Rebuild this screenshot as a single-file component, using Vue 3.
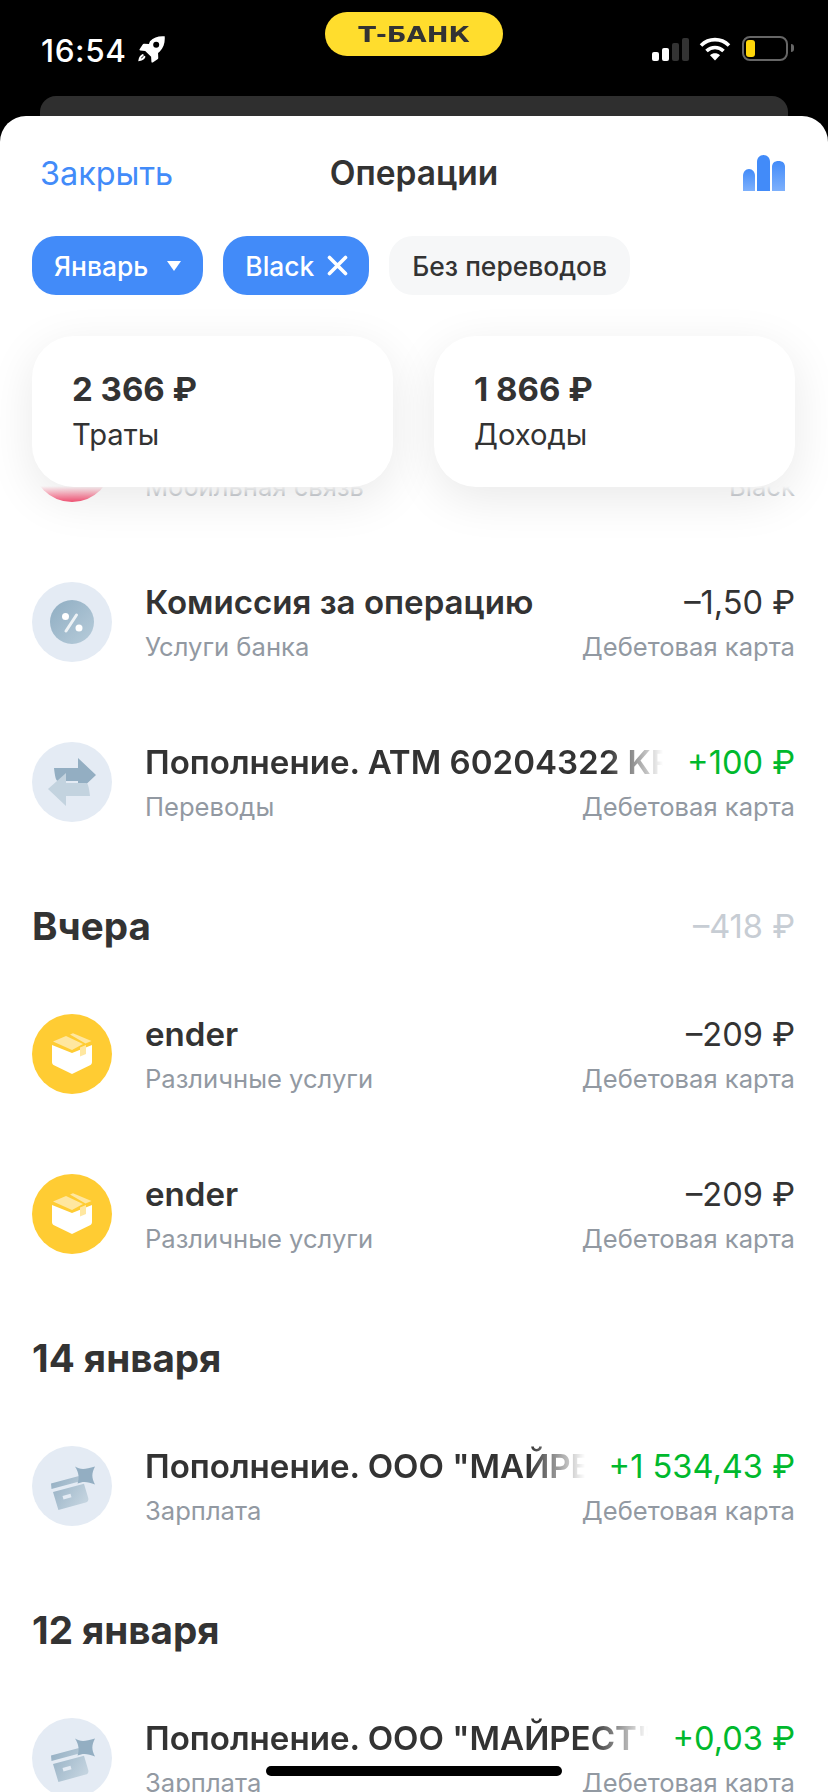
<template>
  <div class="screen">
    <div class="status">
      <div class="status-left">
        <span class="time">16:54</span>
        <svg class="rocket" width="28" height="28" viewBox="0 0 27 27">
          <path fill="#fff" d="M26.700.3c.5 6-1 11-4.700 14.700l-1.700 1.500.2 4.600c0 .6-.2 1.100-.7 1.400l-4.600 3c-.6.4-1.300 0-1.300-.7l-.3-4.700-5.700-5.700-4.700-.3c-.7-.1-1-.8-.7-1.300l3-4.600c.3-.5.800-.8 1.400-.7l4.600.2L12.500 5C16.200 1.300 20.700-.2 26.700.3z"/>
          <circle cx="18.500" cy="8.500" r="2.900" fill="#000"/>
          <path fill="none" stroke="#fff" stroke-width="2" stroke-linecap="round" d="M5.500 18.500c-1.700.8-2.700 2.200-3.100 4.700 2.500-.4 3.900-1.400 4.700-3.100"/>
        </svg>
      </div>
      <div class="brand"><span>Т-БАНК</span></div>
      <div class="status-right">
        <div class="signal">
          <i class="on b1"></i><i class="on b2"></i><i class="b3"></i><i class="b4"></i>
        </div>
        <svg class="wifi" width="32" height="25" viewBox="0 0 32 25">
          <g fill="none" stroke="#fff" stroke-width="3.600">
            <path d="M2 9.500c8-7.800 20-7.800 28 0"/>
            <path d="M7.500 15c4.900-4.700 12.100-4.700 17 0"/>
          </g>
          <path fill="#fff" d="M11 19.200c3-2.600 7-2.600 10 0L16 24.500z"/>
        </svg>
        <div class="battery"><span></span></div>
        <div class="nub"></div>
      </div>
    </div>
    <div class="back-sheet"></div>

    <div class="sheet">
      <header class="head">
        <span class="close">Закрыть</span>
        <span class="title">Операции</span>
        <svg class="stats" width="42" height="36" viewBox="0 0 42 36">
          <defs>
            <linearGradient id="bar" x1="0" y1="0" x2="0" y2="1">
              <stop offset="0" stop-color="#428bf9"/>
              <stop offset="1" stop-color="#7db0fc"/>
            </linearGradient>
          </defs>
          <path fill="url(#bar)" d="M0 36V21c0-4 2.500-7 6-7s6 3 6 7v15z"/>
          <path fill="#428bf9" d="M14 36V7c0-4 2.500-7 6.500-7S27 3 27 7v29z"/>
          <path fill="url(#bar)" d="M29 36V12c0-4 2.500-6 6.500-6S42 8 42 12v24z"/>
        </svg>
      </header>

      <div class="chips">
        <div class="chip active month">
          Январь
          <svg width="14" height="10" viewBox="0 0 14 10"><path fill="#fff" d="M0 0h14L7 10z"/></svg>
        </div>
        <div class="chip active product">
          Black
          <svg width="21" height="21" viewBox="0 0 21 21"><path stroke="#fff" stroke-width="3.600" stroke-linecap="round" d="M2.500 2.500l16 16M18.500 2.500l-16 16"/></svg>
        </div>
        <div class="chip plain">Без переводов</div>
      </div>

      <div class="list">
        <template v-for="(item, i) in items" :key="i">
          <div v-if="item.heading" class="section">
            <span>{{ item.heading }}</span>
            <span v-if="item.total" class="section-total">{{ item.total }}</span>
          </div>
          <div v-else class="row">
            <div class="avatar" :class="'is-' + item.icon">
              <svg v-if="item.icon === 'percent'" width="80" height="80" viewBox="0 0 80 80">
                <circle cx="40" cy="40" r="22" fill="url(#pct)"/>
                <circle cx="33.500" cy="34.500" r="3.500" fill="#fff"/>
                <circle cx="47" cy="46" r="3.500" fill="#fff"/>
                <path stroke="#fff" stroke-opacity=".8" stroke-width="3" stroke-linecap="round" d="M44.500 33L34 49"/>
                <defs>
                  <linearGradient id="pct" x1="0" y1="0" x2="1" y2="1">
                    <stop offset="0" stop-color="#8fadc2"/>
                    <stop offset="1" stop-color="#b7ccda"/>
                  </linearGradient>
                </defs>
              </svg>
              <svg v-else-if="item.icon === 'swap'" width="80" height="80" viewBox="0 0 80 80">
                <path fill="#93aec2" d="M22 26h24V16l18 17-18 17V39H26c-2 0-3-4-4-13z"/>
                <path fill="#c3d3df" d="M58 54H34v10L16 47l18-16v10h20c2 0 3 4 4 13z"/>
              </svg>
              <svg v-else-if="item.icon === 'box'" width="80" height="80" viewBox="0 0 80 80">
                <path fill="#fff" d="M20 31l20 8 20-8v17c0 1.500-.7 2.600-2 3.200L40 60l-18-8.800c-1.300-.6-2-1.700-2-3.200z"/>
                <path fill="#ffe7a0" d="M21 27.500l13-5.500 17 8-11 6zM38 20.500l3-1.300L59.500 27l-6 2.500z"/>
                <path fill="#ffe7a0" d="M48 33.500l6-2.500v9l-6 2.500z"/>
              </svg>
              <svg v-else-if="item.icon === 'salary'" width="80" height="80" viewBox="0 0 80 80">
                <path fill="url(#crd)" d="M19 37.500l27-7.200c2-.5 4 .6 4.500 2.500l.5 1.700-31.500 8.500zM21 46l31-8.300 4.300 14.500c.5 2-.6 3.800-2.600 4.400L26.400 64z"/>
                <path fill="#e4ebf4" d="M30.500 50l8-2.200 1 3.400-8 2.200z"/>
                <path fill="#93aec2" d="M43 20.500c5 3 9 3.500 20 0-3.500 7-3.500 11 0 18-7-3-12-3.500-17.500-1 2-5 1.500-11-2.500-17z"/>
                <defs>
                  <linearGradient id="crd" x1="0" y1="0" x2="1" y2="0.600">
                    <stop offset="0" stop-color="#93aec2"/>
                    <stop offset="1" stop-color="#c3d3df"/>
                  </linearGradient>
                </defs>
              </svg>
            </div>
            <div class="body">
              <div class="line">
                <span class="name" :class="{ fade: item.fade }">{{ item.name }}</span>
                <span class="amount" :class="{ plus: item.amount[0] === '+' }">{{ item.amount }}</span>
              </div>
              <div class="line sub">
                <span>{{ item.cat }}</span>
                <span>{{ item.acc }}</span>
              </div>
            </div>
          </div>
        </template>
      </div>

      <!-- плашка с итогами лежит поверх списка -->
      <div class="veil"></div>
      <div class="summary">
        <div class="card">
          <b>2 366 ₽</b>
          <span>Траты</span>
        </div>
        <div class="card">
          <b>1 866 ₽</b>
          <span>Доходы</span>
        </div>
      </div>
    </div>

    <div class="home"></div>
  </div>
</template>

<script setup>
const debit = 'Дебетовая карта'

const items = [
  { icon: 'phone', name: 'Т-Мобайл', amount: '–400 ₽', cat: 'Мобильная связь', acc: 'Black' },
  { icon: 'percent', name: 'Комиссия за операцию', amount: '–1,50 ₽', cat: 'Услуги банка', acc: debit },
  { icon: 'swap', name: 'Пополнение. ATM 60204322 KRASNODAR', fade: true, amount: '+100 ₽', cat: 'Переводы', acc: debit },
  { heading: 'Вчера', total: '–418 ₽' },
  { icon: 'box', name: 'ender', amount: '–209 ₽', cat: 'Различные услуги', acc: debit },
  { icon: 'box', name: 'ender', amount: '–209 ₽', cat: 'Различные услуги', acc: debit },
  { heading: '14 января' },
  { icon: 'salary', name: 'Пополнение. ООО "МАЙРЕСТ". Зарплата', fade: true, amount: '+1 534,43 ₽', cat: 'Зарплата', acc: debit },
  { heading: '12 января' },
  { icon: 'salary', name: 'Пополнение. ООО "МАЙРЕСТ". Зарплата', fade: true, amount: '+0,03 ₽', cat: 'Зарплата', acc: debit }
]
</script>

<style scoped>
.screen {
  position: relative;
  width: 828px;
  height: 1792px;
  overflow: hidden;
  background: #000;
  font-family: Inter, "Noto Sans", sans-serif;
  color: #333;
}

.status {
  position: relative;
  height: 96px;
  display: flex;
  justify-content: space-between;
  align-items: flex-start;
  padding: 36px 34px 0 41px;
  box-sizing: border-box;
}

.status-left {
  display: flex;
  align-items: center;
  gap: 10px;
}

.time {
  color: #fff;
  font-size: 31.500px;
  letter-spacing: 0.6px;
  line-height: 27px;
  font-weight: 500;
}

.brand {
  position: absolute;
  left: 325px;
  top: 12px;
  width: 178px;
  height: 44px;
  border-radius: 22px;
  background: #ffdd2d;
  color: #333;
  font-family: "DejaVu Sans", sans-serif;
  font-size: 21px;
  font-weight: 700;
  line-height: 46px;
  text-align: center;
}

.brand span {
  display: inline-block;
  transform: scaleX(1.24);
}

.status-right {
  display: flex;
  align-items: flex-start;
}

.signal {
  display: flex;
  align-items: flex-end;
  gap: 3px;
  height: 23px;
  margin-top: 2px;
}

.signal i {
  width: 7px;
  border-radius: 2px;
  background: #333;
}

.signal .on {
  background: #fff;
}

.b1 { height: 9px; }
.b2 { height: 13px; }
.b3 { height: 18px; }
.b4 { height: 23px; }

.wifi {
  margin-left: 10px;
}

.battery {
  width: 46px;
  height: 25px;
  margin-left: 11px;
  padding: 2px;
  box-sizing: border-box;
  border: 2px solid #666;
  border-radius: 8px;
}

.battery span {
  display: block;
  width: 9px;
  height: 17px;
  border-radius: 3px;
  background: #ffd60a;
}

.nub {
  width: 3px;
  height: 8px;
  margin: 8px 0 0 3px;
  border-radius: 0 3px 3px 0;
  background: #666;
}

.back-sheet {
  height: 40px;
  margin: 0 40px -20px;
  border-radius: 16px 16px 0 0;
  background: #2f2f2f;
}

.sheet {
  position: relative;
  height: 1676px;
  overflow: hidden;
  border-radius: 26px 26px 0 0;
  background: #fff;
}

.head {
  height: 114px;
  display: grid;
  grid-template-columns: 1fr auto 1fr;
  align-items: center;
  padding: 0 43px 0 40px;
}

.close {
  color: #428bf9;
  font-size: 32.400px;
}

.title {
  padding-left: 3px;
  font-size: 33.500px;
  font-weight: 600;
}

.stats {
  justify-self: end;
}

.chips {
  display: flex;
  gap: 20px;
  margin-top: 6px;
  padding: 0 32px;
}

.chip {
  height: 59px;
  display: flex;
  align-items: center;
  padding: 0 23px;
  border-radius: 24px;
  font-size: 26.400px;
  font-weight: 500;
}

.chip.month {
  gap: 19px;
  padding: 0 22px;
}

.chip.product {
  gap: 13px;
  padding: 0 21px 0 22px;
}

.chip.active {
  background: #428bf9;
  color: #fff;
}

.chip.plain {
  background: #f6f7f8;
}

.list {
  margin-top: 87px;
  padding: 0 33px 0 32px;
}

.row {
  display: flex;
  gap: 33px;
  height: 160px;
  padding: 40px 0;
  box-sizing: border-box;
}

.avatar {
  flex: none;
  width: 80px;
  height: 80px;
  border-radius: 50%;
  background: #e4ebf4;
}

.avatar.is-box {
  background: #ffcc33;
}

.avatar.is-phone {
  background: #f5335c;
}

.avatar svg {
  display: block;
}

.body {
  flex: 1;
  min-width: 0;
}

.line {
  display: flex;
  justify-content: space-between;
  gap: 20px;
  height: 40px;
  line-height: 40px;
}

.name {
  flex: 1;
  min-width: 0;
  overflow: hidden;
  white-space: nowrap;
  font-size: 33.100px;
  font-weight: 590;
}

.name.fade {
  -webkit-mask-image: linear-gradient(to right, #000 calc(100% - 60px), transparent calc(100% - 4px));
  mask-image: linear-gradient(to right, #000 calc(100% - 60px), transparent calc(100% - 4px));
}

.amount {
  flex: none;
  font-size: 32.600px;
}

.amount.plus {
  color: #00b92d;
}

.sub {
  height: 32px;
  line-height: 32px;
  margin-top: 9px;
  color: #9299a2;
  font-size: 25.600px;
}

.section {
  height: 112px;
  padding-top: 16px;
  box-sizing: border-box;
  display: flex;
  justify-content: space-between;
  align-items: center;
  font-size: 38.600px;
  font-weight: 700;
}

.section-total {
  color: #c7cdd4;
  font-size: 32.600px;
  font-weight: 400;
}

.veil {
  position: absolute;
  top: 179px;
  left: 0;
  right: 0;
  height: 210px;
  background: linear-gradient(to bottom, #fff 0, #fff 91%, rgba(255, 255, 255, 0) 100%);
}

.summary {
  position: absolute;
  top: 220px;
  left: 32px;
  right: 33px;
  display: grid;
  grid-template-columns: 1fr 1fr;
  gap: 41px;
}

.card {
  height: 151px;
  display: flex;
  flex-direction: column;
  justify-content: center;
  gap: 6px;
  padding: 0 0 4px 40px;
  box-sizing: border-box;
  border-radius: 42px;
  background: #fff;
  box-shadow: 0 12px 48px rgba(0, 0, 0, 0.09);
}

.card b {
  font-size: 33px;
  line-height: 44px;
  font-weight: 700;
}

.card span {
  font-size: 29.200px;
  line-height: 36px;
}

.home {
  position: absolute;
  left: 266px;
  top: 1766px;
  width: 296px;
  height: 10px;
  border-radius: 5px;
  background: #000;
}
</style>
<style>
body {
  background: #000;
}
</style>
